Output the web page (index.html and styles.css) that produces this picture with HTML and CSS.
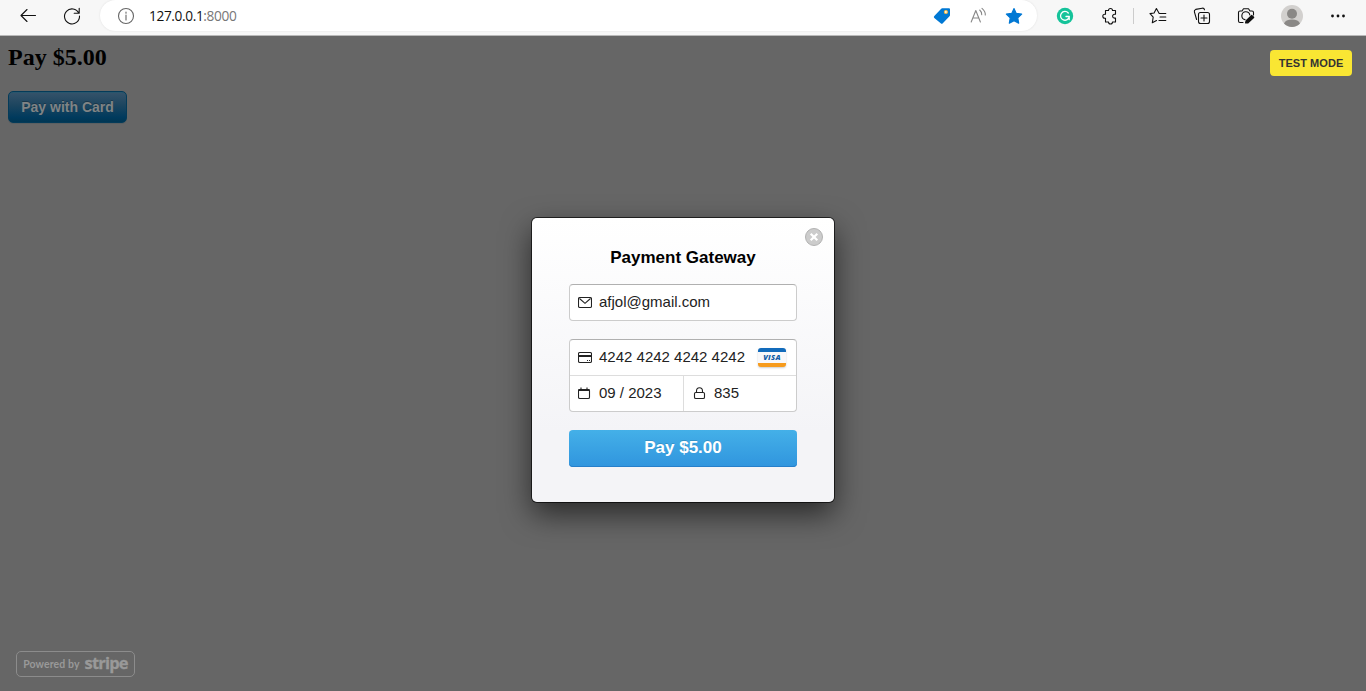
FILE: index.html
```html
<!DOCTYPE html>
<html lang="en">
<head>
<meta charset="utf-8">
<title>Payment Gateway</title>
<link rel="stylesheet" href="styles.css">
</head>
<body>
<header class="toolbar">
  <div class="nav">
    <svg class="icon" viewBox="0 0 20 20"><path d="M17.500 9.500H3M9 3.500 3 9.500 9 15.500"/></svg>
    <svg class="icon" viewBox="0 0 20 20"><path d="M16.800 7.200A7.500 7.500 0 1 0 17.500 10M17.200 2.300v5h-5"/></svg>
  </div>
  <div class="address">
    <svg class="icon info" viewBox="0 0 20 20"><circle cx="10" cy="10" r="7.500"/><path d="M10 9v5M10 6v1.300"/></svg>
    <span class="url">127.0.0.1<span class="port">:8000</span></span>
    <div class="address-tools">
      <svg class="icon" viewBox="0 0 20 20"><path d="M10.200 2.200H17a1 1 0 0 1 1 1V9.200a1.500 1.500 0 0 1-.5 1.100l-6.700 6.900a1.500 1.500 0 0 1-2.100 0L2.300 12a1.300 1.300 0 0 1 0-1.900L9.200 2.700a1.500 1.500 0 0 1 1-.5z" fill="#0078d4" stroke="none"/><circle cx="13.900" cy="6" r="1.500" fill="#fff" stroke="#f4b942" stroke-width="1.200"/></svg>
      <svg class="icon read" viewBox="0 0 20 20"><path d="m3.200 16 4.600-11.500 4.600 11.500M5 12h5.800M11.700 4q2.200 2 2 4.600M14 2.300q3.600 3 3.300 6.700"/></svg>
      <svg class="icon" viewBox="0 0 20 20"><path d="m10 2.500 2.300 4.900 5.400.700-3.900 3.800.9 5.300L10 14.700l-4.700 2.500.9-5.300-3.900-3.800 5.400-.7z" fill="#0078d4" stroke="#0078d4"/></svg>
    </div>
  </div>
  <div class="extensions">
    <svg class="icon" viewBox="0 0 20 20"><circle cx="10" cy="10" r="8.200" fill="#15c39a" stroke="none"/><path d="M13.300 7A4.400 4.400 0 1 0 14.300 10.500H11M14.200 10.500v3" stroke="#fff" stroke-width="1.300"/></svg>
    <svg class="icon" viewBox="0 0 20 20"><path d="M6.500 4.500h3a2 2 0 0 1 4 0h3v3.800h-1a1.900 1.900 0 0 0 0 3.800h1V16h-3a2 2 0 0 1-4 0h-3v-3.700h-.7a2 2 0 0 1 0-4h.7z"/></svg>
  </div>
  <div class="actions">
    <svg class="icon" viewBox="0 0 20 20"><path d="M11.200 7.500H17.800M12 11h5.800M11 14.500h6.800M11.200 7.500 8.400 2.500 6.100 7 2 7.600l3.200 3.500-.9 5.700 4.200-2.300"/></svg>
    <svg class="icon" viewBox="0 0 20 20"><rect x="6.500" y="6.500" width="11" height="11" rx="2"/><path d="M12 9v6M9 12h6M4.600 13.500 2.400 5.800a2 2 0 0 1 1.300-2.400l6.500-1.200a2 2 0 0 1 2.300 1.600"/></svg>
    <svg class="icon" viewBox="0 0 20 20"><path d="M7 16.500H4a1.500 1.500 0 0 1-1.500-1.500V6.500A1.500 1.500 0 0 1 4 5h2l1.500-2.300h5L14 5h2a1.500 1.500 0 0 1 1.500 1.500V9M9 13.600A4 4 0 1 1 13.800 9"/><path d="m9.800 16.800.5-2 5.500-5.100 1.700 1.700-5.600 5.200z" fill="#111" stroke-width="1.600"/></svg>
    <svg class="avatar" viewBox="0 0 22 22"><circle cx="11" cy="11" r="11" fill="#d2d0ce"/><circle cx="11" cy="8.700" r="5" fill="#8a8886"/><path d="M3 18.500q1.500-4 8-4t8 4a11 11 0 0 1-16 0z" fill="#8a8886"/></svg>
    <svg class="icon" viewBox="0 0 20 20"><g fill="#111" stroke="none"><circle cx="5.500" cy="10" r="1.400"/><circle cx="11" cy="10" r="1.400"/><circle cx="16.500" cy="10" r="1.400"/></g></svg>
  </div>
</header>
<main class="page">
  <div class="store">
    <h2 class="price">Pay $5.00</h2>
    <button class="card-button">Pay with Card</button>
  </div>
  <span class="test-mode">TEST MODE</span>
  <section class="dialog">
    <svg class="close" viewBox="0 0 18 18"><circle cx="9" cy="9" r="8.500" fill="#ccc" stroke="#b2b2b2"/><path d="m5.700 5.700 6.600 6.600m0-6.600-6.600 6.600" stroke="#fff" stroke-width="2.200"/></svg>
    <h1 class="title">Payment Gateway</h1>
    <div class="fields email">
      <div class="field"><svg class="glyph" viewBox="0 0 14 13"><rect x=".5" y="1.500" width="13" height="10" rx="1.300"/><path d="m1.500 2.500 5.500 4.800 5.500-4.800"/></svg><span class="value">afjol@gmail.com</span></div>
    </div>
    <div class="fields card">
      <div class="field number"><svg class="glyph" viewBox="0 0 14 13"><rect x=".5" y="1.500" width="13" height="10" rx="1.300"/><path d="M.5 5h13" stroke-width="2"/><path d="M9 9.500h1m1 0h1"/></svg><span class="value">4242 4242 4242 4242</span>
        <span class="visa">VISA</span></div>
      <div class="field expiry"><svg class="glyph" viewBox="0 0 14 13"><rect x=".5" y="2.500" width="11" height="9" rx="1.300"/><path d="M.5 3h11" stroke-width="2"/><path d="M3 .5v2m6-2v2"/></svg><span class="value">09 / 2023</span></div>
      <div class="field code"><svg class="glyph" viewBox="0 0 14 13"><rect x="2.500" y="5.500" width="10" height="6" rx="1.300"/><path d="M4.500 5.500V4a3 3.300 0 0 1 6 0v1.500"/></svg><span class="value">835</span></div>
    </div>
    <button class="submit">Pay $5.00</button>
  </section>
  <div class="powered"><span>Powered by</span><b class="brand">stripe</b></div>
</main>
</body>
</html>
```
FILE: styles.css
```css
* { box-sizing: border-box; }
body { margin: 0; height: 691px; overflow: hidden; display: flex; flex-direction: column; background: #666; font-family: "Liberation Sans", Arial, sans-serif; }
.toolbar { height: 36px; flex: none; display: flex; align-items: flex-start; background: #f7f7f7; border-bottom: 1px solid #b9b9b9; }
.icon { display: block; width: 20px; height: 20px; fill: none; stroke: #111; stroke-width: 1.1; stroke-linecap: round; stroke-linejoin: round; }
.nav { display: flex; gap: 24px; padding: 6px 18px; width: 100px; }
.address { display: flex; align-items: center; width: 937px; height: 31px; padding: 1px 13px 0 16px; border-radius: 16px; background: #fff; box-shadow: 0 0 2px #ddd; }
.info { stroke: #666; }
.url { margin-left: 13px; font: 13.7px/20px "Open Sans", sans-serif; letter-spacing: -.38px; color: #111; }
.port { color: #777; }
.address-tools { display: flex; gap: 16px; margin-left: auto; }
.read { stroke: #888; }
.extensions { display: flex; gap: 24px; padding: 6px 14px 0 18px; }
.actions { display: flex; align-items: center; gap: 24px; margin-top: 8px; height: 16px; padding-left: 14px; border-left: 1px solid #ccc; }
.avatar { width: 22px; height: 22px; margin-left: 1px; }
.page { position: relative; flex: 1; }
.store { padding: 7px 8px; }
.price { margin: 0 0 19px; font: bold 24px/29px "Liberation Serif", "Times New Roman", serif; color: #000; }
.card-button { display: block; width: 119px; height: 32px; padding: 0; border: 1px solid #043b59; border-radius: 5px; background: linear-gradient(#36536a, #1c455f 45%, #003a5d 85%, #003653); box-shadow: inset 0 1px #28566d, 0 1px #5b5f61; color: #808485; font: bold 14px "Liberation Sans", Arial, sans-serif; text-shadow: 0 -1px rgba(0, 0, 0, .25); white-space: nowrap; }
.test-mode { position: absolute; top: 14px; right: 14px; width: 82px; height: 26px; border-radius: 4px; background: #f9e633; color: #333; font: bold 11px/26px "Liberation Sans", Arial, sans-serif; letter-spacing: .05px; text-align: center; }
.dialog { position: absolute; top: 182px; left: 532px; width: 302px; height: 284px; padding: 28px 37px; border-radius: 5px; background: linear-gradient(#fff, #f4f4f7 75%); box-shadow: 0 0 0 1px rgba(0, 0, 0, .65), 0 12px 30px rgba(0, 0, 0, .6); }
.close { position: absolute; top: 10px; right: 11px; width: 18px; height: 18px; }
.title { margin: 0 0 14px; font: bold 17px/24px "Liberation Sans", Arial, sans-serif; text-align: center; color: #000; }
.fields { border: 1px solid #ccc; border-top-color: #b0b0b0; border-radius: 4px; background: #fff; }
.field { display: flex; align-items: center; height: 35px; padding: 0 8px; gap: 7px; color: #222; font-size: 15px; line-height: 17px; white-space: nowrap; }
.value { padding-bottom: 2px; }
.glyph { flex: none; width: 14px; height: 13px; fill: none; stroke: #222; stroke-width: 1.1; }
.email { height: 37px; margin-bottom: 18px; }
.card { display: grid; grid-template-columns: 114px 1fr; height: 73px; margin-bottom: 18px; }
.number { grid-column: 1 / 3; height: 36px; border-bottom: 1px solid #ddd; }
.expiry { border-right: 1px solid #ddd; }
.code { gap: 8px; }
.visa { width: 28px; height: 19px; margin-left: 6px; border: solid #126bbb; border-width: 4px 0; border-bottom-color: #f79b1c; border-radius: 3px; background: #f8f8fa; box-shadow: 0 1px 2px rgba(0, 0, 0, .2); color: #125da6; font: italic 800 7.5px/11px "Open Sans", sans-serif; letter-spacing: .3px; text-align: center; }
.submit { display: block; width: 228px; height: 37px; padding: 0 0 2px; border: 0; border-radius: 4px; background: linear-gradient(#44b0e8, #3095de); box-shadow: inset 0 -1px #267fca; color: #fff; font: bold 17px "Liberation Sans", Arial, sans-serif; text-shadow: 0 -1px rgba(0, 0, 0, .15); }
.powered { position: absolute; left: 16px; bottom: 14px; display: flex; align-items: center; justify-content: center; gap: 5px; width: 119px; height: 26px; border: 1px solid #8c8c8c; border-radius: 5px; color: #999; font: bold 10.5px Lato, sans-serif; letter-spacing: .1px; white-space: nowrap; }
.brand { font: bold 16.500px/20px "Open Sans", sans-serif; letter-spacing: -.8px; padding-bottom: 3px; -webkit-text-stroke: .3px #999; }
```
